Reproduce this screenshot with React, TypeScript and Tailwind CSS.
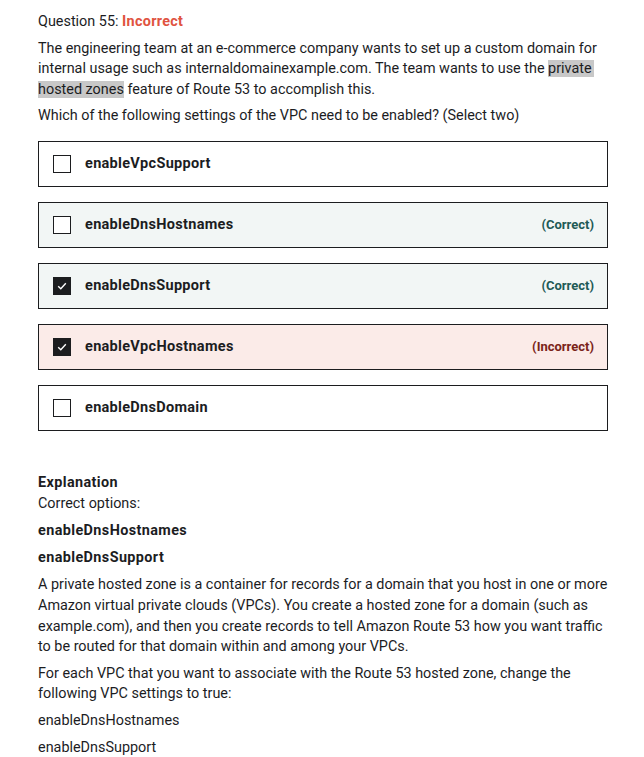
const options = [
  { label: "enableVpcSupport", checked: false, state: "none" },
  { label: "enableDnsHostnames", checked: false, state: "correct" },
  { label: "enableDnsSupport", checked: true, state: "correct" },
  { label: "enableVpcHostnames", checked: true, state: "incorrect" },
  { label: "enableDnsDomain", checked: false, state: "none" },
];

function Check({ checked }: { checked: boolean }) {
  if (!checked) {
    return <span className="w-[18px] h-[18px] border border-[#1c1d1f] bg-white shrink-0" />;
  }
  return (
    <span className="w-[18px] h-[18px] bg-[#1c1d1f] shrink-0 flex items-center justify-center">
      <svg width="12" height="12" viewBox="0 0 12 12" fill="none">
        <path d="M2.2 6.3 L4.8 8.8 L9.8 3.3" stroke="white" strokeWidth="1.4" />
      </svg>
    </span>
  );
}

export default function App() {
  return (
    <div
      className="bg-white w-[644px] min-h-[757px] pl-[38px] pr-[36px] pt-[12px] text-[#1c1d1f] text-[14.4px] leading-[20.6px]"
      style={{ fontFamily: "Roboto, sans-serif" }}
    >
      <div className="mb-[6px]">
        Question 55: <span className="font-bold tracking-[0.3px] text-[#e0533f]">Incorrect</span>
      </div>
      <p className="mb-[6px]">
        The engineering team at an e-commerce company wants to set up a custom domain for internal usage such as
        internaldomainexample.com. The team wants to use the <span className="bg-[#c8c8c8] pr-[2px]">private</span>{" "}
        <span className="bg-[#c8c8c8]">hosted zones</span> feature of Route 53 to accomplish this.
      </p>
      <p className="mb-[14px]">Which of the following settings of the VPC need to be enabled? (Select two)</p>
      <div className="flex flex-col gap-[15px] w-[570px]">
        {options.map((o) => (
          <div
            key={o.label}
            className={
              "h-[46px] border border-[#1c1d1f] flex items-center pl-[14px] pr-[13px] " +
              (o.state === "correct" ? "bg-[#f2f6f5]" : o.state === "incorrect" ? "bg-[#fbebe8]" : "bg-white")
            }
          >
            <Check checked={o.checked} />
            <span className="ml-[14px] font-bold text-[14.5px] tracking-[0.3px] flex-1">{o.label}</span>
            {o.state === "correct" && <span className="font-bold text-[13px] text-[#1e5a56]">(Correct)</span>}
            {o.state === "incorrect" && <span className="font-bold text-[13px] text-[#7a2419]">(Incorrect)</span>}
          </div>
        ))}
      </div>
      <div className="mt-[42px]">
        <div className="font-bold tracking-[0.4px]">Explanation</div>
        <div className="mb-[7px]">Correct options:</div>
        <p className="font-bold tracking-[0.4px] mb-[6px]">enableDnsHostnames</p>
        <p className="font-bold tracking-[0.4px] mb-[7px]">enableDnsSupport</p>
        <p className="mb-[6px]">
          A private hosted zone is a container for records for a domain that you host in one or more Amazon virtual
          private clouds (VPCs). You create a hosted zone for a domain (such as example.com), and then you create
          records to tell Amazon Route 53 how you want traffic to be routed for that domain within and among your VPCs.
        </p>
        <p className="mb-[6px]">
          For each VPC that you want to associate with the Route 53 hosted zone, change the following VPC settings to
          true:
        </p>
        <p className="mb-[6px]">enableDnsHostnames</p>
        <p>enableDnsSupport</p>
      </div>
    </div>
  );
}
